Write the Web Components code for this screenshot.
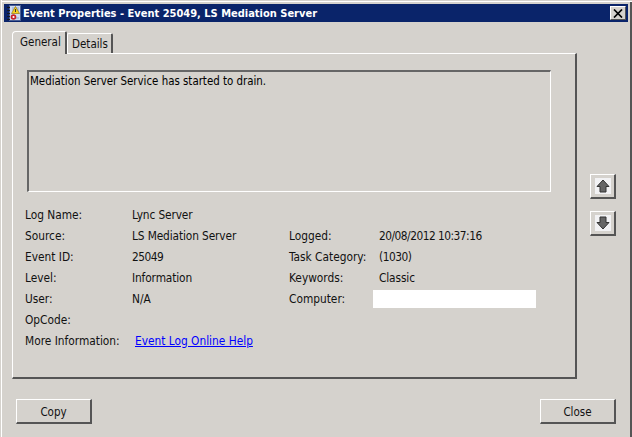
<!DOCTYPE html>
<html><head><meta charset="utf-8"><style>
html,body{margin:0;padding:0;background:#d5d2cd;overflow:hidden}
body{width:632px;height:437px;font:11.5px "DejaVu Sans Condensed","DejaVu Sans",sans-serif;font-stretch:condensed;color:#000}
</style></head><body>
<ev-dialog></ev-dialog>
<script>
const def=(n,html)=>customElements.define(n,class extends HTMLElement{constructor(){super();this.attachShadow({mode:'open'}).innerHTML=html}});
def('title-bar',`<style>
:host{display:flex;align-items:center;height:18px;background:#0a246a;color:#fff;padding:0 2px 0 3px;font:bold 11px "DejaVu Sans Condensed","DejaVu Sans",sans-serif;font-stretch:condensed}
svg{flex:none;margin:0 2px 0 0}
.t{flex:1;white-space:nowrap}
.x{width:16px;height:14px;box-sizing:border-box;background:#d5d2cd;border:1px solid;border-color:#fff #555 #555 #fff;display:flex;align-items:center;justify-content:center}
</style>
<svg width="14" height="16" viewBox="0 0 14 16"><rect x="2.5" y="0.5" width="11" height="15" fill="#cfdcf2" stroke="#4a5f95"/><path d="M5 3h7M5 5h7M5 13h7" stroke="#8fa3cf"/><path d="M0 2.5h3M0 5.5h3M0 8.5h3M0 11.5h3M0 14.5h3" stroke="#1a1a1a"/><path d="M8.5 1.5l4 7h-8z" fill="#f5d020" stroke="#8a6a00" stroke-width=".6"/><path d="M8.5 4v3" stroke="#333"/><circle cx="6.5" cy="12" r="2.8" fill="#c8202a"/><circle cx="6.5" cy="12" r="1.1" fill="#fff"/></svg>
<span class="t"><slot></slot></span>
<span class="x"><svg style="margin:0" width="10" height="9" viewBox="0 0 10 9"><path d="M1 0.5L9 8.5M9 0.5L1 8.5" stroke="#000" stroke-width="1.7" fill="none"/></svg></span>`);
def('tab-strip',`<style>:host{display:flex;align-items:flex-end;height:23px;position:relative;z-index:1}</style><slot></slot>`);
def('tab-item',`<style>
:host{display:block;box-sizing:border-box;width:46px;height:20px;border:1px solid #fff;border-right:2px solid #555;border-bottom:0;border-radius:2px 2px 0 0;padding:3px 0 0 4px;color:#111;white-space:nowrap}
:host([active]){width:55px;height:23px;margin-bottom:-1px;background:#d5d2cd;padding:3px 0 0 7px;position:relative;z-index:2;border-radius:4px 2px 0 0}
</style><slot></slot>`);
def('tab-panel',`<style>
:host{display:block;box-sizing:border-box;width:565px;height:326px;border:1px solid #fff;border-right:2px solid #555;border-bottom:2px solid #555;padding:16px 0 0 14px}
</style><slot></slot>`);
def('message-box',`<style>
:host{display:block;box-sizing:border-box;width:524px;height:122px;border:2px solid #666;border-right:1px solid #fff;border-bottom:1px solid #fff;padding:2px 1px;font-size:11.4px}
</style><slot></slot>`);
def('info-grid',`<style>
:host{display:grid;grid-template-columns:107px 157px 90px 1fr;grid-auto-rows:21px;align-items:center;margin:12px 0 0 -2px;white-space:nowrap;color:#111;font-size:11.8px}
</style><slot></slot>`);
def('redact-box',`<style>:host{display:block;width:163px;height:18px;background:#fff;margin-left:-6px}</style>`);
def('win-button',`<style>
:host{display:flex;align-items:center;justify-content:center;box-sizing:border-box;width:76px;height:25px;padding-top:1px;background:#d5d2cd;border:1px solid #fff;border-right:2px solid #555;border-bottom:2px solid #555;color:#111}
</style><slot></slot>`);
def('arrow-button',`<style>
:host{display:flex;align-items:center;justify-content:center;box-sizing:border-box;width:26px;height:25px;background:#d5d2cd;border:1px solid #fff;border-right:2px solid #555;border-bottom:2px solid #555}
span{display:flex;width:16px;height:16px;background:#f2f2f4;align-items:center;justify-content:center}
</style><span><slot></slot></span>`);
def('ev-dialog',`<style>
:host{display:flex;flex-direction:column;box-sizing:border-box;width:632px;height:437px;padding:4px 4px 0 4px;background:#d5d2cd;position:relative;box-shadow:inset 1px 0 0 #d5d2cd,inset 2px 0 0 #fff,inset 0 1px 0 #d5d2cd,inset 0 2px 0 #fff,inset -2px 0 0 #555}
.body{display:flex;padding:8px 0 0 8px}
.side{display:flex;flex-direction:column;gap:12px;margin:144px 0 0 13px}
.foot{display:flex;justify-content:space-between;padding:20px 12px 0 12px}
a{color:#00f;text-decoration:underline;margin-left:3px}
svg{display:block}
.num{letter-spacing:-.5px}
.val{letter-spacing:-.12px}
</style>
<title-bar>Event Properties - Event 25049, LS Mediation Server</title-bar>
<div class="body">
 <div>
  <tab-strip><tab-item active>General</tab-item><tab-item>Details</tab-item></tab-strip>
  <tab-panel>
   <message-box>Mediation Server Service has started to drain.</message-box>
   <info-grid>
    <span>Log Name:</span><span class="val">Lync Server</span><span></span><span></span>
    <span>Source:</span><span class="val">LS Mediation Server</span><span>Logged:</span><span class="num">20/08/2012 10:37:16</span>
    <span>Event ID:</span><span class="num">25049</span><span>Task Category:</span><span class="num">(1030)</span>
    <span>Level:</span><span class="val">Information</span><span>Keywords:</span><span class="val">Classic</span>
    <span>User:</span><span>N/A</span><span>Computer:</span><redact-box></redact-box>
    <span>OpCode:</span><span></span><span></span><span></span>
    <span>More Information:</span><span><a href="#">Event Log Online Help</a></span><span></span><span></span>
   </info-grid>
  </tab-panel>
 </div>
 <div class="side">
  <arrow-button><svg width="14" height="14" viewBox="0 0 14 14"><path d="M7 1L13 7.5H10V13H4V7.5H1Z" fill="#666" stroke="#333"/></svg></arrow-button>
  <arrow-button><svg width="14" height="14" viewBox="0 0 14 14"><path d="M7 13L13 6.5H10V1H4V6.5H1Z" fill="#666" stroke="#333"/></svg></arrow-button>
 </div>
</div>
<div class="foot"><win-button>Copy</win-button><win-button>Close</win-button></div>`);
</script></body></html>
